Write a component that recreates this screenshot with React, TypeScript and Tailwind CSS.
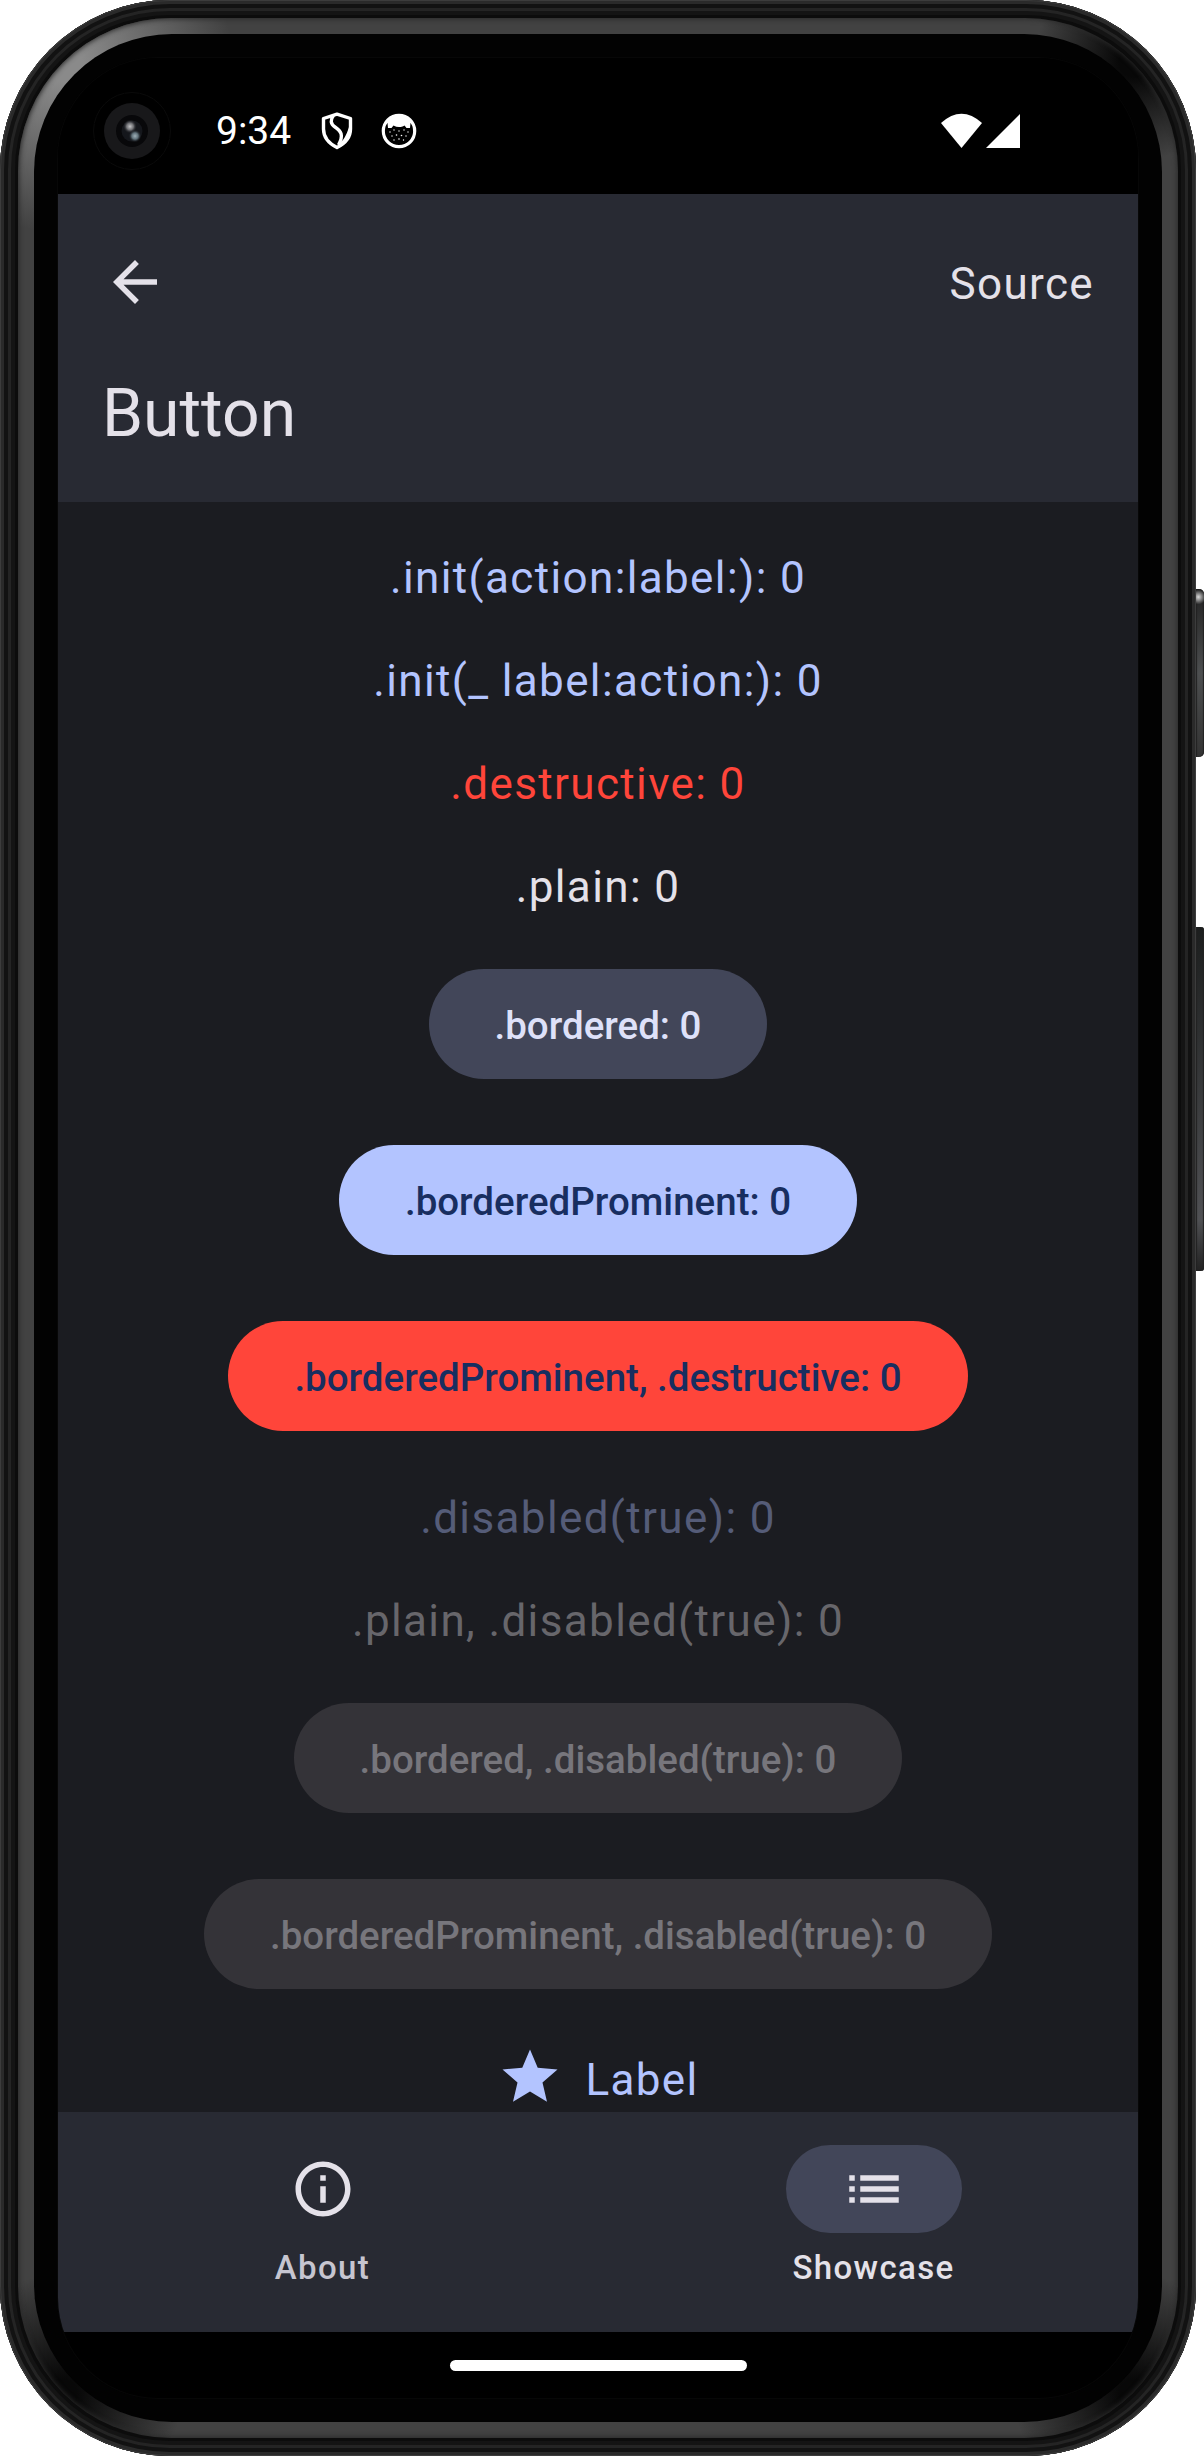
import type { ReactNode } from "react";

function ShieldIcon() {
  return (
    <svg viewBox="0 0 32 38" className="h-[38px] w-8" fill="none">
      <path
        d="M16 2.200 L29.500 6.500 V17 C29.500 25 24 31.500 16 35.500 C8 31.500 2.500 25 2.500 17 V6.500 Z"
        stroke="#fff"
        strokeWidth="3.400"
        strokeLinejoin="round"
      />
      <path
        d="M12.500 3.500 C9 8 9.500 12 14 15 C20 19 23 23 17.500 33"
        stroke="#fff"
        strokeWidth="3.400"
      />
      <path d="M28 15 C25 24 23 28 17 33 L21 33 C26 29 29 23 29 16 Z" fill="#fff" />
    </svg>
  );
}

function CatIcon() {
  return (
    <svg viewBox="0 0 36 36" className="size-9">
      <circle cx="18" cy="18" r="15.700" fill="#000" stroke="#fff" strokeWidth="3.200" />
      <path
        d="M4 11 C7 5 12 2 18 2 C24 2 29 5 32 11 L29.500 10 L29 15 L25.500 15 L23.500 12.500 C20 14.500 16 14.500 12.500 12.500 L10.500 15 L7 15 L6.500 10 Z"
        fill="#fff"
      />
      <g fill="#fff">
        <circle cx="9" cy="19" r=".7" />
        <circle cx="13" cy="17" r=".7" />
        <circle cx="18" cy="18" r=".7" />
        <circle cx="23" cy="17" r=".7" />
        <circle cx="27" cy="19" r=".7" />
        <circle cx="11" cy="23" r=".7" />
        <circle cx="15.500" cy="22" r=".8" />
        <circle cx="20.500" cy="22.500" r=".8" />
        <circle cx="25" cy="23" r=".7" />
        <circle cx="13" cy="27" r=".7" />
        <circle cx="18" cy="26" r=".8" />
        <circle cx="22.500" cy="27" r=".7" />
      </g>
    </svg>
  );
}

function StatusBar() {
  return (
    <div className="flex h-[136px] shrink-0 items-center bg-black pt-2.5">
      <div className="ml-[35px] flex size-[78px] items-center justify-center rounded-full border border-[#0a0a0a]">
        <svg viewBox="0 0 56 56" className="size-14">
          <defs>
            <radialGradient id="lensTop">
              <stop offset="0" stopColor="#c4c4c6" />
              <stop offset=".5" stopColor="#6d6e72" />
              <stop offset="1" stopColor="#15161a" stopOpacity="0" />
            </radialGradient>
            <radialGradient id="lensBottom">
              <stop offset="0" stopColor="#9fb0b8" />
              <stop offset=".5" stopColor="#5f7079" />
              <stop offset="1" stopColor="#15161a" stopOpacity="0" />
            </radialGradient>
          </defs>
          <circle cx="28" cy="28" r="28" fill="#18181a" />
          <circle cx="28" cy="28" r="16" fill="#08080a" />
          <circle cx="28" cy="28" r="10.500" fill="#15171c" />
          <circle cx="26" cy="23.500" r="7" fill="url(#lensTop)" />
          <circle cx="31" cy="33" r="6.500" fill="url(#lensBottom)" />
        </svg>
      </div>
      <span className="ml-[45px] w-[76px] text-[39px] leading-[46px] text-white">9:34</span>
      <div className="ml-[29px] flex items-center gap-7">
        <ShieldIcon />
        <CatIcon />
      </div>
      <svg viewBox="0 0 80 36" className="mr-[118px] ml-auto h-9 w-20" fill="#fff">
        <path d="M1 10 Q21.500 -8.500 42 10 L21.500 35 Z" />
        <path d="M46 35 L80 1 V35 Z" />
      </svg>
    </div>
  );
}

function Header() {
  return (
    <header className="flex h-[308px] shrink-0 flex-col bg-[#282a33] px-11 text-[#e4e1e9]">
      <div className="flex h-44 items-center justify-between">
        <svg viewBox="0 0 24 24" className="size-[66px]" fill="currentColor">
          <path d="M20 11H7.830l5.590-5.590L12 4l-8 8 8 8 1.410-1.410L7.830 13H20v-2z" />
        </svg>
        <span className="pt-[3px] text-[44px] leading-[66px] tracking-[1.375px]">Source</span>
      </div>
      <h1 className="text-[66px] leading-[88px]">Button</h1>
    </header>
  );
}

function TextButton({ className, children }: { className: string; children: ReactNode }) {
  return (
    <button className={`h-[59px] pt-[5px] text-[44px] leading-[54px] tracking-[1.375px] ${className}`}>
      {children}
    </button>
  );
}

function PillButton({ className, children }: { className: string; children: ReactNode }) {
  return (
    <button
      className={`my-[11px] h-[110px] rounded-full px-[66px] pt-0.5 text-[38.5px] leading-[55px] font-medium ${className}`}
    >
      {children}
    </button>
  );
}

function Content() {
  return (
    <main className="flex h-[1610px] shrink-0 flex-col items-center gap-11 overflow-hidden bg-[#1b1c21] pt-11 whitespace-nowrap">
      <TextButton className="text-[#b3c4ff]">.init(action:label:): 0</TextButton>
      <TextButton className="text-[#b3c4ff]">.init(_ label:action:): 0</TextButton>
      <TextButton className="text-[#ff453a]">.destructive: 0</TextButton>
      <TextButton className="text-[#e4e1e9]">.plain: 0</TextButton>
      <PillButton className="bg-[#424659] text-[#dee1f9]">.bordered: 0</PillButton>
      <PillButton className="bg-[#b3c4ff] text-[#182e60]">.borderedProminent: 0</PillButton>
      <PillButton className="bg-[#ff453a] text-[#182e60]">.borderedProminent, .destructive: 0</PillButton>
      <TextButton className="text-[#555c78]">.disabled(true): 0</TextButton>
      <TextButton className="text-[#67666b]">.plain, .disabled(true): 0</TextButton>
      <PillButton className="bg-[#343338] text-[#77767c]">.bordered, .disabled(true): 0</PillButton>
      <PillButton className="bg-[#343338] text-[#77767c]">.borderedProminent, .disabled(true): 0</PillButton>
      <button className="flex h-[66px] items-center gap-[22px] text-[#b3c4ff]">
        <svg viewBox="0 0 24 24" className="size-[66px]" fill="currentColor">
          <path d="M12 17.270L18.180 21l-1.640-7.030L22 9.240l-7.190-.61L12 2 9.190 8.630 2 9.240l5.460 4.730L5.820 21z" />
        </svg>
        <span className="pt-1.5 text-[44px] leading-[60px] tracking-[1.375px]">Label</span>
      </button>
    </main>
  );
}

function NavItem({
  label,
  pill,
  text,
  children,
}: {
  label: string;
  pill: string;
  text: string;
  children: ReactNode;
}) {
  return (
    <div className="flex flex-1 flex-col items-center pt-[33px]">
      <div className={`flex h-[88px] w-44 items-center justify-center rounded-full ${pill}`}>
        <svg viewBox="0 0 24 24" className="size-[66px]" fill="#e4e1e9">
          {children}
        </svg>
      </div>
      <span className={`mt-[13px] text-[33px] leading-[44px] font-medium tracking-[1.375px] ${text}`}>{label}</span>
    </div>
  );
}

function BottomNav() {
  return (
    <nav className="flex h-[220px] shrink-0 gap-[22px] bg-[#282a33]">
      <NavItem label="About" pill="" text="text-[#c6c5d0]">
        <path d="M11 7h2v2h-2zm0 4h2v6h-2zm1-9C6.480 2 2 6.480 2 12s4.480 10 10 10 10-4.480 10-10S17.520 2 12 2zm0 18c-4.410 0-8-3.590-8-8s3.590-8 8-8 8 3.590 8 8-3.590 8-8 8z" />
      </NavItem>
      <NavItem label="Showcase" pill="bg-[#424659]" text="text-[#e4e1e9]">
        <path d="M3 13h2v-2H3v2zm0 4h2v-2H3v2zm0-8h2V7H3v2zm4 4h14v-2H7v2zm0 4h14v-2H7v2zM7 7v2h14V7H7z" />
      </NavItem>
    </nav>
  );
}

export default function App() {
  return (
    <div className="flex h-[2456px] w-[1204px] bg-white font-['Roboto',sans-serif]">
      <div className="h-[2456px] w-[1196px] rounded-[170px] bg-[#0c0c0c] p-[18px] shadow-[inset_0_0_0_1px_#3c3c3c,inset_0_0_0_4px_#2a2a2a,inset_0_0_0_8px_#121212,inset_0_0_0_11px_#242424,inset_0_0_0_15px_#141414]">
        <div className="h-full rounded-[153px] bg-[#424242] bg-[radial-gradient(circle_at_44px_44px,#8a8a8a_20px,transparent_170px),radial-gradient(circle_at_1116px_44px,#080808_15px,transparent_100px),radial-gradient(circle_at_44px_2376px,#080808_15px,transparent_120px),radial-gradient(circle_at_1116px_2376px,#080808_15px,transparent_120px)] p-4 shadow-[inset_0_0_5px_1px_#2a2a2a]">
          <div className="h-full rounded-[138px] bg-[#020202] p-6">
            <div className="flex h-full flex-col overflow-hidden rounded-[100px] bg-black shadow-[0_0_0_1px_#070707]">
              <StatusBar />
              <Header />
              <Content />
              <BottomNav />
              <div className="flex h-[66px] items-center justify-center">
                <div className="h-[11px] w-[297px] rounded-full bg-white" />
              </div>
            </div>
          </div>
        </div>
      </div>
      <div className="flex w-2 flex-col pt-[589px]">
        <div className="h-[168px] rounded-r-[5px] bg-linear-to-b from-[#222] via-[#4d4f50] via-50% to-[#333] shadow-[inset_1px_0_1px_#222,inset_-1px_0_1px_#222]">
          <div className="h-4 rounded-tr-[5px] bg-[radial-gradient(circle_at_30%_50%,#dadada,transparent_75%)]" />
        </div>
        <div className="mt-[170px] h-[344px] rounded-r-[3px] bg-linear-to-b from-[#1c1e1e] via-[#505154] via-85% to-[#222] shadow-[inset_1px_0_1px_#222,inset_-1px_0_1px_#222]" />
      </div>
    </div>
  );
}
